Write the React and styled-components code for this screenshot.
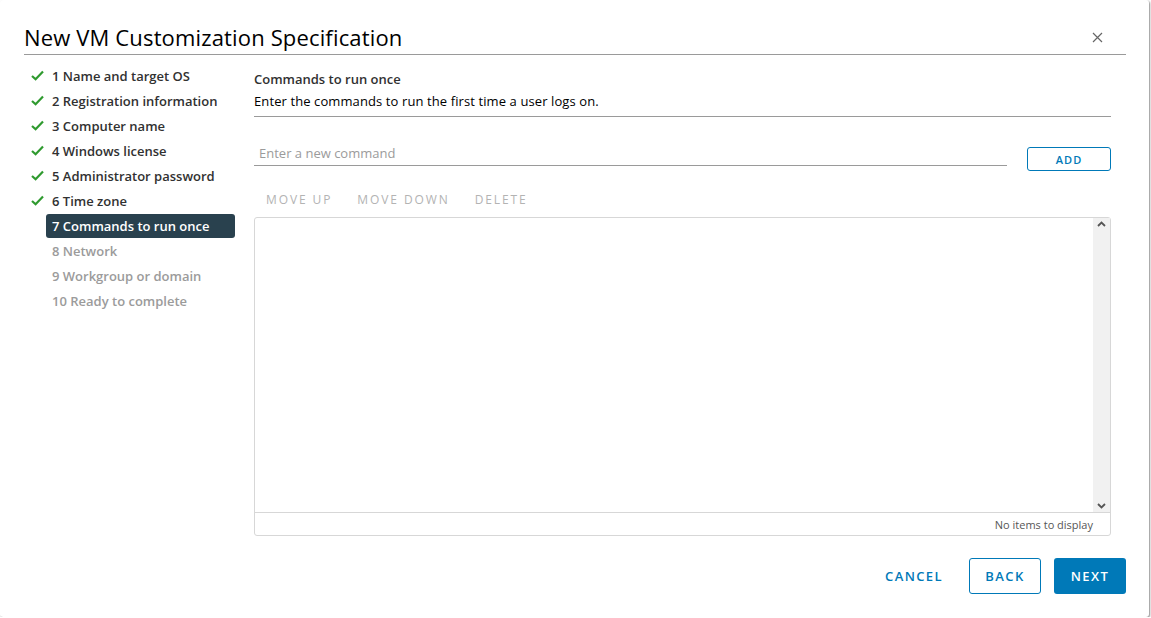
import React from "react";
import styled, { createGlobalStyle } from "styled-components";

const GlobalStyle = createGlobalStyle`
  html, body {
    margin: 0;
    padding: 0;
    background: #ffffff;
  }
  body {
    font-family: "Open Sans", "Noto Sans", sans-serif;
    color: #313131;
  }
`;

const Dialog = styled.div`
  box-sizing: border-box;
  width: 1149px;
  height: 617px;
  background: #ffffff;
  border-radius: 3px;
  box-shadow: 1px 1px 2px rgba(0, 0, 0, 0.45);
  display: flex;
  flex-direction: column;
  padding: 0 23px 23px 24px;
`;

const Header = styled.div`
  display: flex;
  align-items: center;
  justify-content: space-between;
  height: 55px;
  box-sizing: border-box;
  padding-top: 20px;
  border-bottom: 1px solid #9a9a9a;
`;

const Title = styled.h1`
  margin: 0;
  font-size: 22px;
  font-weight: 400;
  color: #000000;
  letter-spacing: 0.15px;
`;

const Close = styled.button`
  background: none;
  border: none;
  padding: 0;
  margin-right: 22px;
  width: 14px;
  height: 14px;
  display: flex;
  align-items: center;
  justify-content: center;
  cursor: pointer;
`;

const Body = styled.div`
  flex: 1;
  display: flex;
  padding-top: 8px;
`;

const Nav = styled.ul`
  list-style: none;
  margin: 0;
  padding: 0;
  width: 211px;
  flex-shrink: 0;
`;

const NavItem = styled.li`
  display: flex;
  align-items: center;
  height: 25px;
`;

const NavIcon = styled.span`
  width: 22px;
  display: flex;
  justify-content: center;
  padding-left: 5px;
  box-sizing: border-box;
`;

const NavLabel = styled.span`
  flex: 1;
  height: 24px;
  line-height: 24px;
  padding-left: 6px;
  border-radius: 3px;
  font-size: 13px;
  font-weight: 600;
  white-space: nowrap;
  color: ${(p) => (p.$state === "todo" ? "#9b9b9b" : p.$state === "active" ? "#ffffff" : "#313131")};
  background: ${(p) => (p.$state === "active" ? "#29414e" : "transparent")};
`;

const Content = styled.div`
  flex: 1;
  margin-left: 19px;
  margin-right: 15px;
  display: flex;
  flex-direction: column;
`;

const SectionTitle = styled.div`
  font-size: 13px;
  font-weight: 600;
  color: #313131;
  line-height: 22px;
  margin-top: 5px;
`;

const SectionText = styled.div`
  font-size: 13px;
  color: #000000;
  line-height: 22px;
  letter-spacing: 0.1px;
  padding-bottom: 4px;
  border-bottom: 1px solid #9a9a9a;
`;

const InputRow = styled.div`
  display: flex;
  align-items: flex-end;
  margin-top: 26px;
  gap: 20px;
`;

const CommandInput = styled.input`
  flex: 1;
  border: none;
  border-bottom: 1px solid #9a9a9a;
  font-family: inherit;
  font-size: 13px;
  padding: 0 5px 3px 5px;
  height: 23px;
  box-sizing: border-box;
  outline: none;
  margin-bottom: 5px;
  &::placeholder {
    color: #9b9b9b;
  }
`;

const OutlineButton = styled.button`
  box-sizing: border-box;
  width: ${(p) => p.$width || "auto"};
  height: ${(p) => p.$height || "24px"};
  border: 1px solid #0079b8;
  border-radius: 3px;
  background: #ffffff;
  color: #0079b8;
  font-family: inherit;
  font-size: ${(p) => p.$size || "11px"};
  font-weight: 600;
  letter-spacing: ${(p) => p.$spacing || "1px"};
  padding: 0;
  cursor: pointer;
`;

const Toolbar = styled.div`
  display: flex;
  gap: 25px;
  padding-left: 12px;
  margin-top: 16px;
  height: 24px;
  align-items: center;
`;

const ToolButton = styled.button`
  background: none;
  border: none;
  padding: 0;
  font-family: inherit;
  font-size: 12px;
  font-weight: 400;
  letter-spacing: 1.9px;
  color: #b3b3b3;
`;

const Grid = styled.div`
  margin-top: 6px;
  height: 319px;
  box-sizing: border-box;
  border: 1px solid #d7d7d7;
  border-radius: 3px;
  display: flex;
  flex-direction: column;
`;

const GridBody = styled.div`
  flex: 1;
  display: flex;
  justify-content: flex-end;
  border-bottom: 1px solid #d7d7d7;
`;

const ScrollBar = styled.div`
  width: 17px;
  background: #f1f1f1;
  display: flex;
  flex-direction: column;
  justify-content: space-between;
  align-items: center;
  padding: 3px 0;
`;

const GridFooter = styled.div`
  height: 22px;
  display: flex;
  align-items: center;
  justify-content: flex-end;
  padding-right: 17px;
  font-size: 11px;
  color: #565656;
`;

const Footer = styled.div`
  display: flex;
  justify-content: flex-end;
  align-items: center;
  gap: 13px;
`;

const LinkButton = styled.button`
  background: none;
  border: none;
  padding: 0 13px;
  height: 36px;
  font-family: inherit;
  font-size: 13px;
  font-weight: 600;
  letter-spacing: 1.4px;
  color: #0079b8;
`;

const PrimaryButton = styled.button`
  width: 72px;
  height: 36px;
  border: none;
  border-radius: 3px;
  background: #0079b8;
  color: #ffffff;
  font-family: inherit;
  font-size: 13px;
  font-weight: 600;
  letter-spacing: 1.4px;
  padding: 0;
`;

const Check = () => (
  <svg width="13" height="11" viewBox="0 0 13 11">
    <path d="M1 6 L4.6 9.3 L12 1.6" fill="none" stroke="#2f9a2f" strokeWidth="2.2" />
  </svg>
);

const Chevron = ({ up }) => (
  <svg width="9" height="6" viewBox="0 0 9 6">
    <path d={up ? "M1 5 L4.5 1.5 L8 5" : "M1 1 L4.5 4.5 L8 1"} fill="none" stroke="#555" strokeWidth="1.8" />
  </svg>
);

const steps = [
  ["1 Name and target OS", "done"],
  ["2 Registration information", "done"],
  ["3 Computer name", "done"],
  ["4 Windows license", "done"],
  ["5 Administrator password", "done"],
  ["6 Time zone", "done"],
  ["7 Commands to run once", "active"],
  ["8 Network", "todo"],
  ["9 Workgroup or domain", "todo"],
  ["10 Ready to complete", "todo"],
];

export default function App() {
  return (
    <>
      <GlobalStyle />
      <Dialog>
        <Header>
          <Title>New VM Customization Specification</Title>
          <Close aria-label="Close">
            <svg width="11" height="11" viewBox="0 0 11 11">
              <path d="M1 1 L10 10 M10 1 L1 10" stroke="#666" strokeWidth="1.2" />
            </svg>
          </Close>
        </Header>
        <Body>
          <Nav>
            {steps.map(([label, state]) => (
              <NavItem key={label}>
                <NavIcon>{state === "done" && <Check />}</NavIcon>
                <NavLabel $state={state}>{label}</NavLabel>
              </NavItem>
            ))}
          </Nav>
          <Content>
            <SectionTitle>Commands to run once</SectionTitle>
            <SectionText>Enter the commands to run the first time a user logs on.</SectionText>
            <InputRow>
              <CommandInput placeholder="Enter a new command" />
              <OutlineButton $width="84px">ADD</OutlineButton>
            </InputRow>
            <Toolbar>
              <ToolButton>MOVE UP</ToolButton>
              <ToolButton>MOVE DOWN</ToolButton>
              <ToolButton>DELETE</ToolButton>
            </Toolbar>
            <Grid>
              <GridBody>
                <ScrollBar>
                  <Chevron up />
                  <Chevron />
                </ScrollBar>
              </GridBody>
              <GridFooter>No items to display</GridFooter>
            </Grid>
          </Content>
        </Body>
        <Footer>
          <LinkButton>CANCEL</LinkButton>
          <OutlineButton $width="72px" $height="36px" $size="13px" $spacing="1.4px">BACK</OutlineButton>
          <PrimaryButton>NEXT</PrimaryButton>
        </Footer>
      </Dialog>
    </>
  );
}
